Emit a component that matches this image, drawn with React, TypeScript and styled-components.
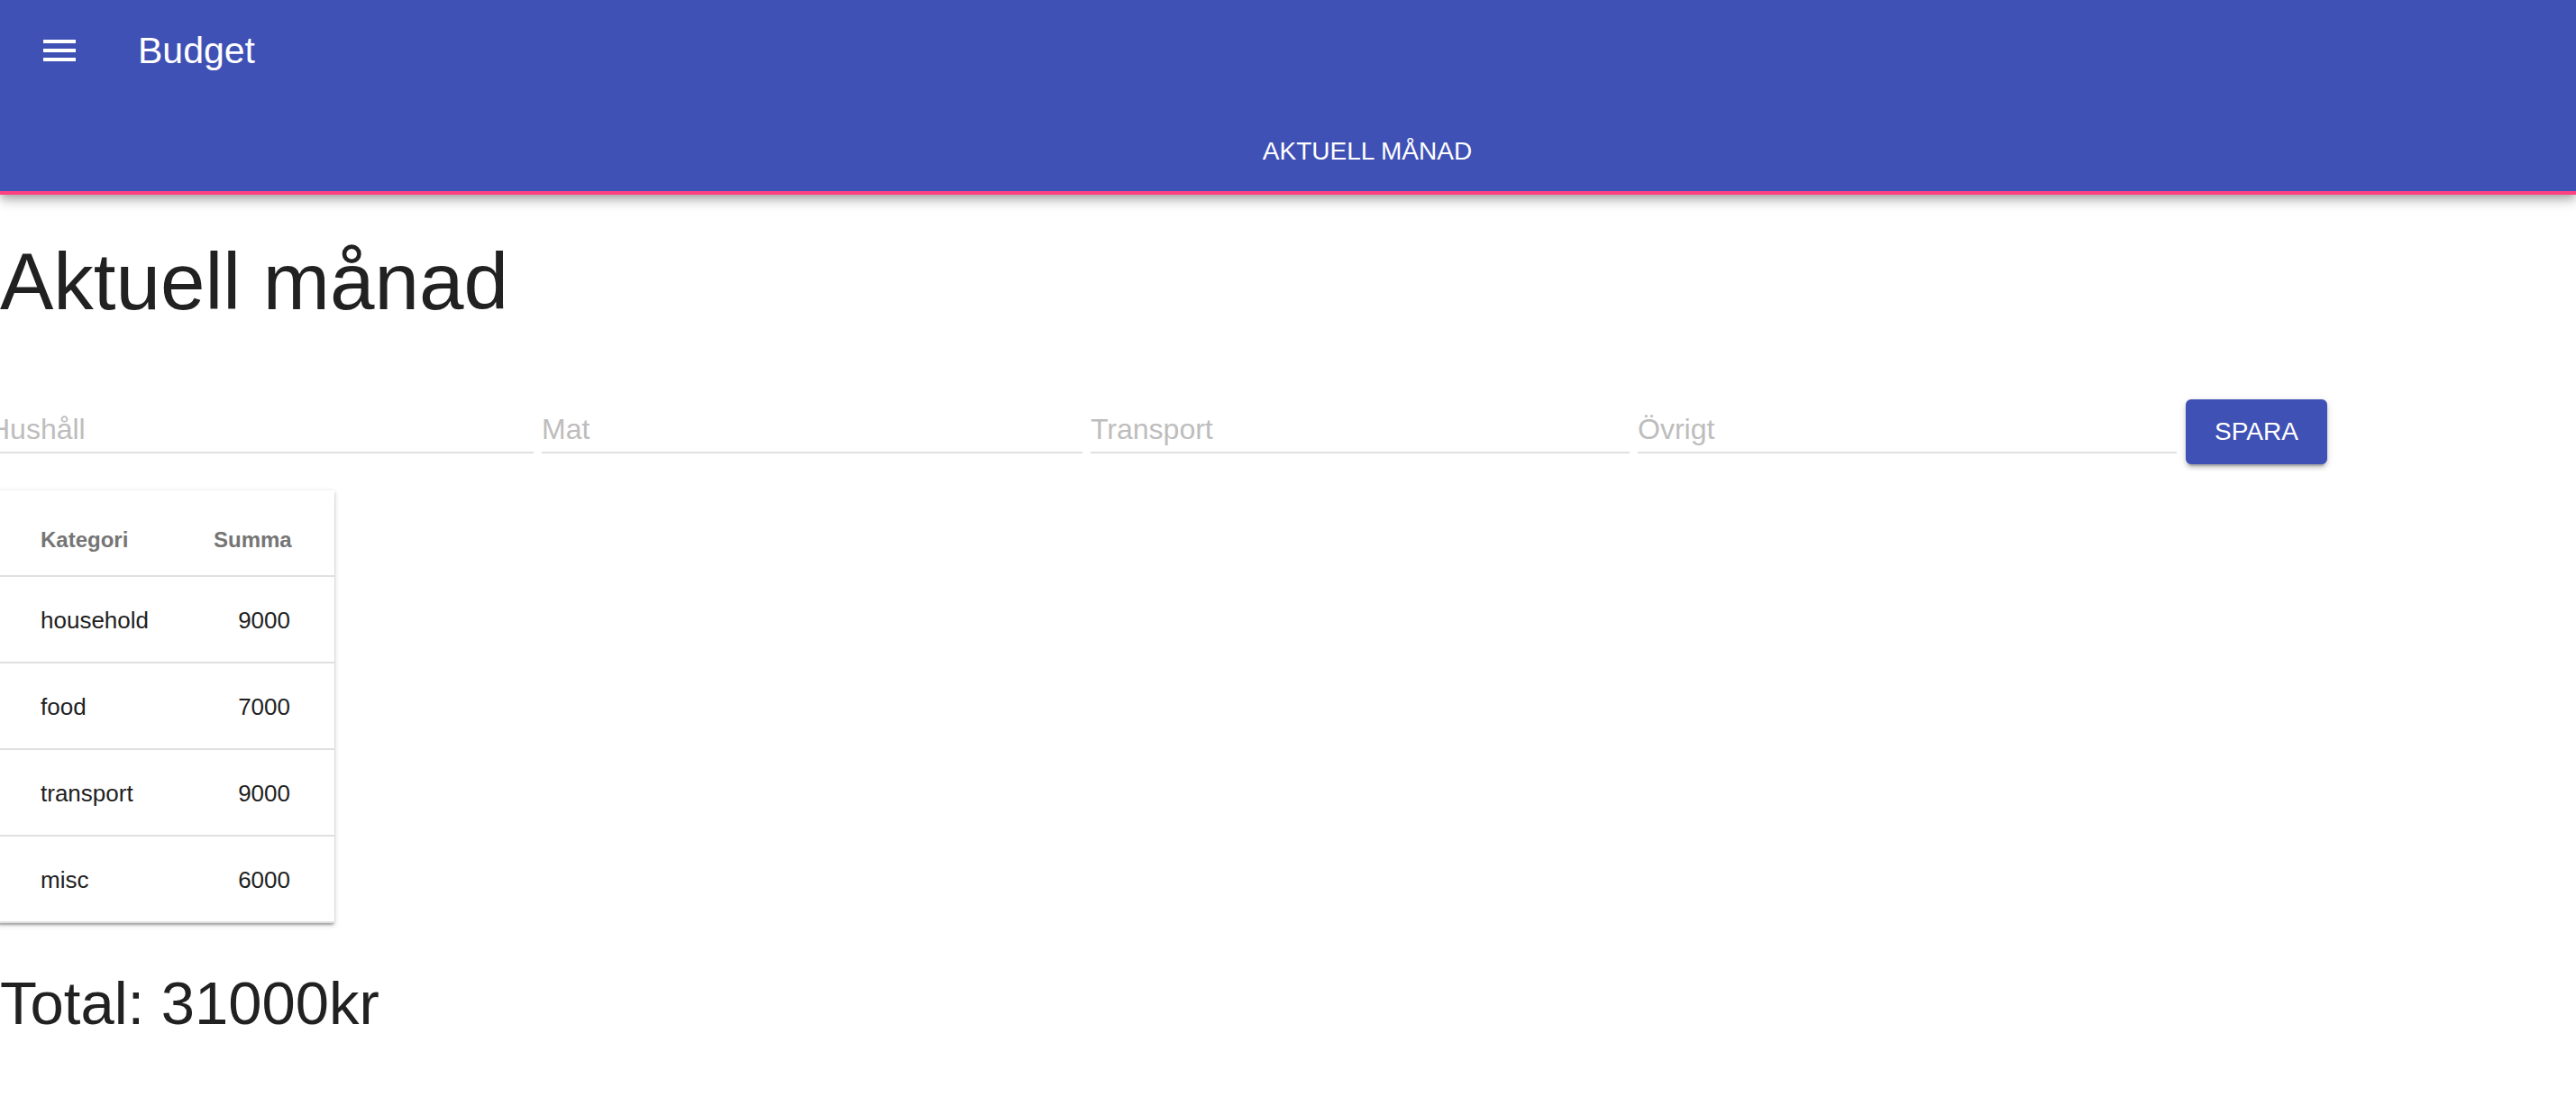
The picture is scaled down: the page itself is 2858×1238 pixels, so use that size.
import React from "react";
import styled, { createGlobalStyle } from "styled-components";

const GlobalStyle = createGlobalStyle`
  html, body {
    margin: 0;
    padding: 0;
    background: #ffffff;
    font-family: "Liberation Sans", Arial, Helvetica, sans-serif;
    overflow: hidden;
  }
  * { box-sizing: border-box; }
`;

const AppBar = styled.header`
  position: relative;
  z-index: 2;
  background: #3f51b5;
  color: #ffffff;
  box-shadow: 0 4px 8px -2px rgba(0, 0, 0, 0.2), 0 8px 10px 0 rgba(0, 0, 0, 0.14),
    0 2px 20px 0 rgba(0, 0, 0, 0.12);
`;

const Toolbar = styled.div`
  height: 112px;
  display: flex;
  align-items: center;
  padding-left: 18px;
`;

const IconButton = styled.button`
  display: flex;
  align-items: center;
  justify-content: center;
  padding: 24px;
  margin: 0 39px 0 0;
  border: none;
  background: transparent;
  color: #ffffff;
  border-radius: 50%;
  cursor: pointer;
`;

const Title = styled.h1`
  margin: 0;
  font-size: 41px;
  font-weight: 400;
  line-height: 48px;
  color: #ffffff;
`;

const TabBar = styled.nav`
  margin-top: 8px;
  display: flex;
`;

const Tab = styled.div<{ $selected?: boolean }>`
  flex: 1;
  height: 96px;
  display: flex;
  align-items: center;
  justify-content: center;
  padding-left: 176px;
  font-size: 28px;
  text-transform: uppercase;
  color: ${(p) => (p.$selected ? "#ffffff" : "rgba(255,255,255,0.7)")};
  border-bottom: 4px solid ${(p) => (p.$selected ? "#ff4081" : "transparent")};
  padding-top: 4px;
`;

const Main = styled.main`
  padding: 0;
`;

const Heading = styled.h2`
  margin: 42px 0 0 0;
  font-size: 89px;
  line-height: 108px;
  font-weight: 400;
  color: #212121;
`;

const FormRow = styled.div`
  margin: 77px 0 0 -12px;
  display: grid;
  grid-template-columns: 604px 600px 598px 598px auto;
  column-gap: 9px;
  align-items: start;
  justify-items: stretch;
`;

const Input = styled.input`
  display: block;
  width: 100%;
  margin-top: 14px;
  height: 46px;
  padding: 0 0 6px 0;
  border: none;
  border-bottom: 2px solid #e0e0e0;
  outline: none;
  background: transparent;
  font-family: "Liberation Sans", Arial, Helvetica, sans-serif;
  font-size: 32px;
  line-height: 38px;
  color: #212121;
  &::placeholder {
    color: #bdbdbd;
    opacity: 1;
  }
`;

const Button = styled.button`
  justify-self: start;
  margin-left: 1px;
  height: 72px;
  padding: 0 32px;
  border: none;
  border-radius: 6px;
  background: #3f51b5;
  color: #ffffff;
  font-family: "Liberation Sans", Arial, Helvetica, sans-serif;
  font-size: 28px;
  text-transform: uppercase;
  box-shadow: 0 2px 10px 0 rgba(0, 0, 0, 0.12), 0 4px 4px 0 rgba(0, 0, 0, 0.14),
    0 6px 2px -4px rgba(0, 0, 0, 0.2);
  cursor: pointer;
`;

const Card = styled.div`
  margin: 29px 0 0 -3px;
  width: 374px;
  background: #ffffff;
  box-shadow: 0 2px 6px 0 rgba(0, 0, 0, 0.2), 0 2px 2px 0 rgba(0, 0, 0, 0.14),
    0 4px 2px -2px rgba(0, 0, 0, 0.12);
`;

const Row = styled.div<{ $head?: boolean }>`
  display: grid;
  grid-template-columns: 240px 134px;
  align-items: center;
  height: 96px;
  padding-top: ${(p) => (p.$head ? "16px" : "3px")};
  border-bottom: 2px solid #e0e0e0;
  font-size: ${(p) => (p.$head ? "24px" : "26px")};
  font-weight: ${(p) => (p.$head ? 700 : 400)};
  color: ${(p) => (p.$head ? "#757575" : "#212121")};
`;

const Cell = styled.div<{ $numeric?: boolean }>`
  padding: ${(p) => (p.$numeric ? "0 49px 0 0" : "0 0 0 48px")};
  text-align: ${(p) => (p.$numeric ? "right" : "left")};
`;

const Total = styled.h3`
  margin: 49px 0 0 0;
  font-size: 67px;
  line-height: 80px;
  font-weight: 400;
  color: #212121;
`;

const MenuIcon = () => (
  <svg width="48" height="48" viewBox="0 0 24 24" fill="currentColor">
    <path d="M3 18h18v-2H3v2zm0-5h18v-2H3v2zm0-7v2h18V6H3z" />
  </svg>
);

const rows = [
  { category: "household", sum: 9000 },
  { category: "food", sum: 7000 },
  { category: "transport", sum: 9000 },
  { category: "misc", sum: 6000 },
];

export default function App() {
  const total = rows.reduce((a, r) => a + r.sum, 0);
  return (
    <>
      <GlobalStyle />
      <AppBar>
        <Toolbar>
          <IconButton aria-label="Menu">
            <MenuIcon />
          </IconButton>
          <Title>Budget</Title>
        </Toolbar>
        <TabBar>
          <Tab $selected>Aktuell månad</Tab>
        </TabBar>
      </AppBar>
      <Main>
        <Heading>Aktuell månad</Heading>
        <FormRow>
          <Input placeholder="Hushåll" />
          <Input placeholder="Mat" />
          <Input placeholder="Transport" />
          <Input placeholder="Övrigt" />
          <Button>Spara</Button>
        </FormRow>
        <Card>
          <Row $head>
            <Cell>Kategori</Cell>
            <Cell $numeric>Summa</Cell>
          </Row>
          {rows.map((r) => (
            <Row key={r.category}>
              <Cell>{r.category}</Cell>
              <Cell $numeric>{r.sum}</Cell>
            </Row>
          ))}
        </Card>
        <Total>Total: {total}kr</Total>
      </Main>
    </>
  );
}
